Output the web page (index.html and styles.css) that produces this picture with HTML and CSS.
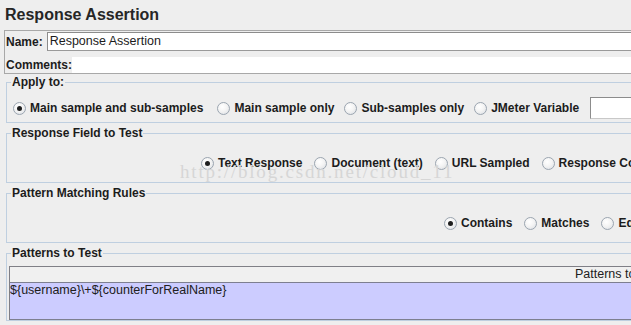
FILE: index.html
```html
<!DOCTYPE html>
<html>
<head>
<meta charset="utf-8">
<title>Response Assertion</title>
<link rel="stylesheet" href="styles.css">
</head>
<body>
<div class="page">
  <h1 class="title">Response Assertion</h1>

  <div class="name-panel">
    <div class="name-row">
      <label class="lbl name-lbl">Name:</label>
      <div class="field">Response Assertion</div>
    </div>
    <div class="comments-row">
      <label class="lbl">Comments:</label>
      <div class="comments-area"></div>
    </div>
  </div>

  <fieldset class="group apply">
    <legend>Apply to:</legend>
    <div class="row">
      <span class="opt first"><span class="radio checked"></span>Main sample and sub-samples</span>
      <span class="opt tight"><span class="radio"></span>Main sample only</span>
      <span class="opt tight"><span class="radio"></span>Sub-samples only</span>
      <span class="opt"><span class="radio"></span>JMeter Variable</span>
      <span class="var-field"></span>
    </div>
  </fieldset>

  <fieldset class="group field-test">
    <legend>Response Field to Test</legend>
    <div class="row row-field">
      <span class="opt"><span class="radio checked"></span>Text Response</span>
      <span class="opt"><span class="radio"></span>Document (text)</span>
      <span class="opt"><span class="radio"></span>URL Sampled</span>
      <span class="opt"><span class="radio"></span>Response Code</span>
      <span class="opt"><span class="radio"></span>Response Message</span>
    </div>
  </fieldset>

  <fieldset class="group rules">
    <legend>Pattern Matching Rules</legend>
    <div class="row row-rules">
      <span class="opt"><span class="radio checked"></span>Contains</span>
      <span class="opt"><span class="radio"></span>Matches</span>
      <span class="opt"><span class="radio"></span>Equals</span>
    </div>
  </fieldset>

  <fieldset class="group patterns">
    <legend>Patterns to Test</legend>
    <div class="table">
      <div class="thead">Patterns to Test</div>
      <div class="tbody">
        <div class="trow selected">${username}\+${counterForRealName}</div>
      </div>
    </div>
  </fieldset>

  <div class="watermark">http://blog.csdn.net/cloud_11</div>
</div>
</body>
</html>
```

FILE: styles.css
```css
html, body {
  margin: 0;
  padding: 0;
  background: #eeeeee;
  overflow: hidden;
}
body {
  width: 631px;
  height: 325px;
  font-family: "Liberation Sans", Arial, sans-serif;
  color: #1c1c1c;
}
.page {
  position: relative;
  width: 1240px;
}
.title {
  margin: 0;
  padding-left: 5px;
  height: 30px;
  line-height: 30px;
  font-size: 16px;
  font-weight: bold;
  color: #262626;
}
.lbl {
  font-size: 12px;
  font-weight: bold;
}
.name-panel {
  margin-left: 4px;
  border: 1px solid #a8a8a8;
  border-right: none;
}
.name-row {
  display: flex;
  align-items: center;
  padding-top: 1px;
  padding-left: 1px;
  height: 19px;
}
.name-lbl {
  margin-right: 4px;
}
.field {
  flex: 1;
  height: 17px;
  line-height: 17px;
  background: #ffffff;
  border: 1px solid #8c8c8c;
  border-bottom-color: #9a9a9a;
  font-size: 12.5px;
  padding-left: 2px;
}
.comments-row {
  display: flex;
  align-items: flex-end;
  padding-left: 1px;
  height: 22px;
}
.comments-row .lbl {
  line-height: 16px;
  height: 16px;
}
.comments-area {
  flex: 1;
  height: 16px;
  background: #ffffff;
}

.group {
  margin: 2px 0 0 6px;
  padding: 0 0 0 6px;
  border: 1px solid #bfcfe0;
  border-right: none;
  min-width: 0;
}
.group.apply {
  margin-top: 0;
}
.group legend {
  font-size: 12px;
  font-weight: bold;
  line-height: 16px;
  padding: 0 1px;
  margin-left: -2px;
  color: #1c1c1c;
}
.row {
  display: flex;
  align-items: center;
  height: 20px;
  font-size: 12px;
  font-weight: bold;
}
.apply .row {
  height: 22px;
  padding: 7px 0 3px 0;
}
.field-test .row,
.rules .row {
  padding: 12px 0 9px 0;
}
.row-field {
  padding-left: 188px !important;
}
.row-rules {
  padding-left: 431px !important;
}
.opt {
  display: inline-flex;
  align-items: center;
  white-space: nowrap;
  margin-right: 12px;
}
.opt.first {
  margin-right: 14px;
}
.opt.tight {
  margin-right: 10px;
}
.radio {
  box-sizing: border-box;
  width: 13px;
  height: 13px;
  border-radius: 50%;
  border: 1px solid #9ba5b0;
  background: radial-gradient(circle at 40% 35%, #ffffff 0%, #f4f4f4 45%, #d9dde2 100%);
  margin-right: 4px;
  position: relative;
  flex: none;
}
.radio.checked::after {
  content: "";
  position: absolute;
  left: 3px;
  top: 3px;
  width: 5px;
  height: 5px;
  border-radius: 50%;
  background: #1e1e1e;
}
.var-field {
  margin-left: -1px;
  width: 160px;
  height: 20px;
  background: #ffffff;
  border: 1px solid #8c8c8c;
  border-bottom-color: #c8c8c8;
  border-right-color: #c8c8c8;
}

.patterns {
  padding-left: 2px;
  padding-top: 5px;
}
.patterns legend {
  margin-left: 2px;
}
.table {
  border-top: 1px solid #7f7f86;
  border-left: 1px solid #7f7f86;
}
.thead {
  height: 15px;
  line-height: 15px;
  font-size: 12.5px;
  padding-left: 565px;
  background: #f0f0f0;
  border-bottom: 1px solid #7d7f90;
  color: #202020;
}
.trow {
  height: 36px;
  line-height: 15px;
  font-size: 12.5px;
  padding-left: 0;
  background: #ccccff;
  border-bottom: 1px solid #7d7f90;
  color: #202020;
}
.watermark {
  position: absolute;
  left: 180px;
  top: 161px;
  font-family: "Liberation Serif", "Times New Roman", serif;
  font-size: 19px;
  letter-spacing: 1.8px;
  color: #d6d6d6;
  white-space: nowrap;
  pointer-events: none;
}
```
